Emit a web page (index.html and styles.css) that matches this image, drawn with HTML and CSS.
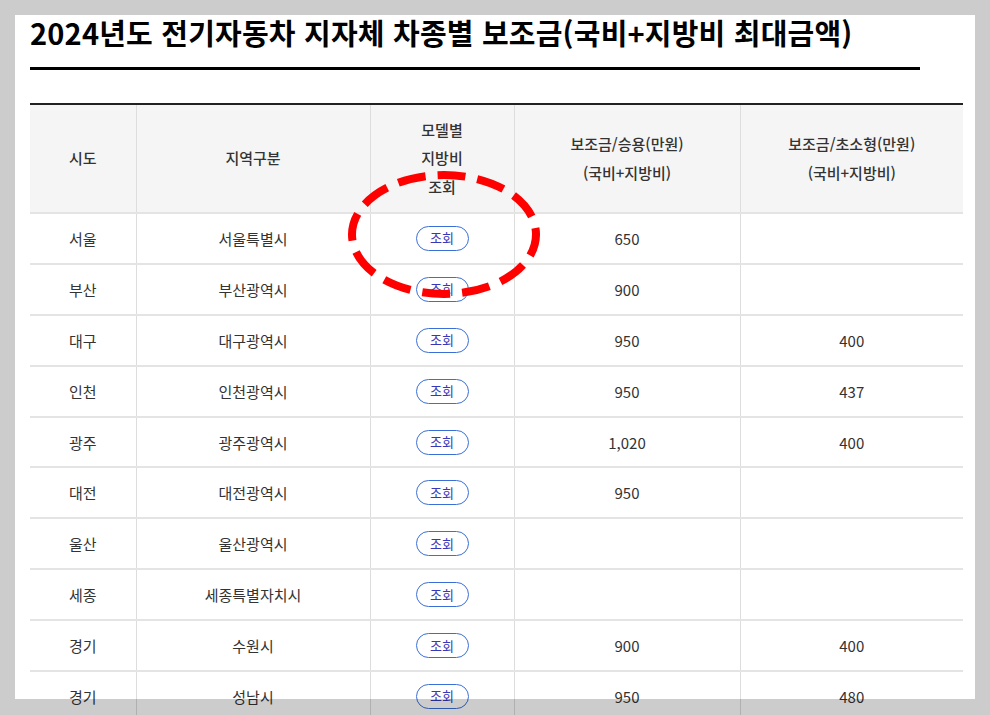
FILE: index.html
```html
<!DOCTYPE html>
<html lang="ko">
<head>
  <meta charset="UTF-8">
  <meta name="viewport" content="width=device-width, initial-scale=1.0">
  <title>2024년도 전기자동차 지자체 차종별 보조금</title>
  <link rel="stylesheet" href="styles.css">
</head>
<body>
  <div class="page">
    <h1 class="title">2024년도 전기자동차 지자체 차종별 보조금(국비+지방비 최대금액)</h1>
    <div class="title-rule"></div>
    <table class="subsidy">
      <colgroup>
        <col class="c-sido">
        <col class="c-area">
        <col class="c-model">
        <col class="c-car">
        <col class="c-small">
      </colgroup>
      <thead>
        <tr>
          <th>시도</th>
          <th>지역구분</th>
          <th>모델별<br>지방비<br>조회</th>
          <th>보조금/승용(만원)<br>(국비+지방비)</th>
          <th>보조금/초소형(만원)<br>(국비+지방비)</th>
        </tr>
      </thead>
      <tbody>
        <tr><td>서울</td><td>서울특별시</td><td><button class="btn-view">조회</button></td><td>650</td><td></td></tr>
        <tr><td>부산</td><td>부산광역시</td><td><button class="btn-view">조회</button></td><td>900</td><td></td></tr>
        <tr><td>대구</td><td>대구광역시</td><td><button class="btn-view">조회</button></td><td>950</td><td>400</td></tr>
        <tr><td>인천</td><td>인천광역시</td><td><button class="btn-view">조회</button></td><td>950</td><td>437</td></tr>
        <tr><td>광주</td><td>광주광역시</td><td><button class="btn-view">조회</button></td><td>1,020</td><td>400</td></tr>
        <tr><td>대전</td><td>대전광역시</td><td><button class="btn-view">조회</button></td><td>950</td><td></td></tr>
        <tr><td>울산</td><td>울산광역시</td><td><button class="btn-view">조회</button></td><td></td><td></td></tr>
        <tr><td>세종</td><td>세종특별자치시</td><td><button class="btn-view">조회</button></td><td></td><td></td></tr>
        <tr><td>경기</td><td>수원시</td><td><button class="btn-view">조회</button></td><td>900</td><td>400</td></tr>
        <tr><td>경기</td><td>성남시</td><td><button class="btn-view">조회</button></td><td>950</td><td>480</td></tr>
      </tbody>
    </table>
    <svg class="mark" width="210" height="140" viewBox="0 0 210 140">
      <ellipse cx="104" cy="69.5" rx="92" ry="59.5" fill="none" stroke="#ff0000" stroke-width="8" stroke-dasharray="28 12" stroke-dashoffset="6"/>
    </svg>
  </div>
  <div class="frame"></div>
</body>
</html>
```

FILE: styles.css
```css
html, body {
  margin: 0;
  background: #fff;
}
body {
  font-family: "Noto Sans CJK KR", "Noto Sans", sans-serif;
  color: #333;
}
.page {
  position: relative;
  padding: 12px 0 0 30px;
}
.title {
  margin: 0;
  font-size: 29px;
  font-weight: 700;
  line-height: 40px;
  color: #000;
  letter-spacing: 0.2px;
}
.title-rule {
  width: 890px;
  height: 3px;
  background: #000;
  margin: 15px 0 33px;
}
.subsidy {
  width: 933px;
  border-collapse: collapse;
  table-layout: fixed;
  border-top: 2px solid #222;
  font-size: 15px;
}
.c-sido { width: 106px; }
.c-area { width: 234px; }
.c-model { width: 144px; }
.c-car { width: 226px; }
.c-small { width: 223px; }
.subsidy th {
  background: #f5f5f5;
  font-weight: 500;
  color: #333;
  line-height: 28.5px;
  height: 107px;
  padding: 0;
  border-left: 1px solid #ddd;
  border-bottom: 2px solid #e4e4e4;
}
.subsidy td {
  height: 48.9px;
  padding: 0;
  text-align: center;
  border-left: 1px solid #ddd;
  border-bottom: 2px solid #e4e4e4;
}
.subsidy th:first-child,
.subsidy td:first-child {
  border-left: 0;
}
.btn-view {
  font-family: inherit;
  font-size: 13px;
  color: #3838b8;
  background: #fff;
  border: 1.5px solid #3a6fd8;
  border-radius: 13px;
  width: 53px;
  height: 25px;
  padding: 0;
  line-height: 20px;
}
.mark {
  position: absolute;
  left: 340px;
  top: 165px;
}
.frame {
  position: fixed;
  inset: 0;
  border-style: solid;
  border-color: rgba(0, 0, 0, 0.2);
  border-width: 15px 15px 16px 15px;
  pointer-events: none;
}
```
